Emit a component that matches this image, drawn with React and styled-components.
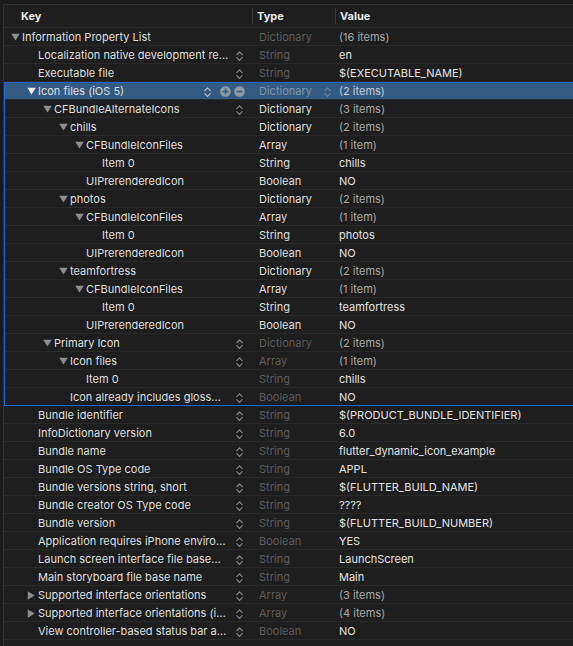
import React from 'react'
import styled, { createGlobalStyle } from 'styled-components'

const GlobalStyle = createGlobalStyle`
    html, body {
        margin: 0;
        padding: 0;
        background: #1b1b1b;
    }
    body {
        font-family: Inter, "Liberation Sans", sans-serif;
        -webkit-font-smoothing: antialiased;
    }
`

// level, open: 'down' | 'right' | null, key, type, value, flags
const rows = [
    { level: 0, open: 'down', key: 'Information Property List', type: 'Dictionary', value: '(16 items)', count: true },
    { level: 1, key: 'Localization native development re…', type: 'String', value: 'en', stepper: true },
    { level: 1, key: 'Executable file', type: 'String', value: '$(EXECUTABLE_NAME)', stepper: true },
    { level: 1, open: 'down', key: 'Icon files (iOS 5)', type: 'Dictionary', value: '(2 items)', count: true, stepper: true, selected: true },
    { level: 2, open: 'down', key: 'CFBundleAlternateIcons', type: 'Dictionary', value: '(3 items)', count: true, stepper: true, bright: true },
    { level: 3, open: 'down', key: 'chills', type: 'Dictionary', value: '(2 items)', count: true, bright: true },
    { level: 4, open: 'down', key: 'CFBundleIconFiles', type: 'Array', value: '(1 item)', count: true, bright: true },
    { level: 5, key: 'Item 0', type: 'String', value: 'chills', bright: true },
    { level: 4, key: 'UIPrerenderedIcon', type: 'Boolean', value: 'NO', bright: true },
    { level: 3, open: 'down', key: 'photos', type: 'Dictionary', value: '(2 items)', count: true, bright: true },
    { level: 4, open: 'down', key: 'CFBundleIconFiles', type: 'Array', value: '(1 item)', count: true, bright: true },
    { level: 5, key: 'Item 0', type: 'String', value: 'photos', bright: true },
    { level: 4, key: 'UIPrerenderedIcon', type: 'Boolean', value: 'NO', bright: true },
    { level: 3, open: 'down', key: 'teamfortress', type: 'Dictionary', value: '(2 items)', count: true, bright: true },
    { level: 4, open: 'down', key: 'CFBundleIconFiles', type: 'Array', value: '(1 item)', count: true, bright: true },
    { level: 5, key: 'Item 0', type: 'String', value: 'teamfortress', bright: true },
    { level: 4, key: 'UIPrerenderedIcon', type: 'Boolean', value: 'NO', bright: true },
    { level: 2, open: 'down', key: 'Primary Icon', type: 'Dictionary', value: '(2 items)', count: true, stepper: true },
    { level: 3, open: 'down', key: 'Icon files', type: 'Array', value: '(1 item)', count: true, stepper: true },
    { level: 4, key: 'Item 0', type: 'String', value: 'chills' },
    { level: 3, key: 'Icon already includes gloss…', type: 'Boolean', value: 'NO', stepper: true },
    { level: 1, key: 'Bundle identifier', type: 'String', value: '$(PRODUCT_BUNDLE_IDENTIFIER)', stepper: true },
    { level: 1, key: 'InfoDictionary version', type: 'String', value: '6.0', stepper: true },
    { level: 1, key: 'Bundle name', type: 'String', value: 'flutter_dynamic_icon_example', stepper: true },
    { level: 1, key: 'Bundle OS Type code', type: 'String', value: 'APPL', stepper: true },
    { level: 1, key: 'Bundle versions string, short', type: 'String', value: '$(FLUTTER_BUILD_NAME)', stepper: true },
    { level: 1, key: 'Bundle creator OS Type code', type: 'String', value: '????', stepper: true },
    { level: 1, key: 'Bundle version', type: 'String', value: '$(FLUTTER_BUILD_NUMBER)', stepper: true },
    { level: 1, key: 'Application requires iPhone enviro…', type: 'Boolean', value: 'YES', stepper: true },
    { level: 1, key: 'Launch screen interface file base…', type: 'String', value: 'LaunchScreen', stepper: true },
    { level: 1, key: 'Main storyboard file base name', type: 'String', value: 'Main', stepper: true },
    { level: 1, open: 'right', key: 'Supported interface orientations', type: 'Array', value: '(3 items)', count: true, stepper: true },
    { level: 1, open: 'right', key: 'Supported interface orientations (i…', type: 'Array', value: '(4 items)', count: true, stepper: true },
    { level: 1, key: 'View controller-based status bar a…', type: 'Boolean', value: 'NO', stepper: true },
]

const Stepper = ({ color = '#8a8a8a' }) => (
    <svg width="7" height="12" viewBox="0 0 7 12" fill="none">
        <path d="M0.8 4.6 L3.5 1.9 L6.2 4.6" stroke={color} strokeWidth="1.1" strokeLinecap="round" strokeLinejoin="round" />
        <path d="M0.8 7.6 L3.5 10.3 L6.2 7.6" stroke={color} strokeWidth="1.1" strokeLinecap="round" strokeLinejoin="round" />
    </svg>
)

const Disclosure = ({ dir, color }) =>
    dir === 'down' ? (
        <svg width="9" height="8" viewBox="0 0 9 8">
            <path d="M0.3 0.8 L8.7 0.8 L4.5 7.6 Z" fill={color} />
        </svg>
    ) : (
        <svg width="8" height="9" viewBox="0 0 8 9">
            <path d="M0.8 0.3 L7.6 4.5 L0.8 8.7 Z" fill={color} />
        </svg>
    )

const RoundButton = ({ minus }) => (
    <svg width="11" height="11" viewBox="0 0 11 11">
        <circle cx="5.5" cy="5.5" r="5.3" fill="#8f9aa6" />
        <rect x="2.6" y="4.8" width="5.8" height="1.5" fill="#345b80" />
        {!minus && <rect x="4.75" y="2.6" width="1.5" height="5.8" fill="#345b80" />}
    </svg>
)

const PlistRow = ({ row }) => (
    <Row $selected={row.selected}>
        <KeyCell $level={row.level}>
            <Toggle>
                {row.open && (
                    <Disclosure dir={row.open} color={row.selected ? '#f2f2f2' : '#8e8e8e'} />
                )}
            </Toggle>
            <KeyText>{row.key}</KeyText>
            {row.stepper && (
                <Controls $wide={row.selected}>
                    <Stepper color={row.selected ? '#b9c4d0' : '#8a8a8a'} />
                    {row.selected && (
                        <>
                            <RoundGap />
                            <RoundButton />
                            <RoundButton minus />
                        </>
                    )}
                </Controls>
            )}
        </KeyCell>
        <TypeCell $bright={row.bright} $selected={row.selected}>
            <span>{row.type}</span>
            {row.selected && <Stepper color="#6f89a6" />}
        </TypeCell>
        <ValueCell $count={row.count} $selected={row.selected}>
            {row.value}
        </ValueCell>
    </Row>
)

const App = () => {
    const before = rows.slice(0, 3)
    const group = rows.slice(3, 21)
    const after = rows.slice(21)

    return (
        <>
            <GlobalStyle />
            <Window>
                <Panel>
                    <Header>
                        <HeaderCell $pad={17}>Key</HeaderCell>
                        <HeaderCell $pad={4} $divider>Type</HeaderCell>
                        <HeaderCell $pad={4} $divider>Value</HeaderCell>
                    </Header>
                    {before.map((row, i) => (
                        <PlistRow key={'b' + i} row={row} />
                    ))}
                    <Group>
                        {group.map((row, i) => (
                            <PlistRow key={'g' + i} row={row} />
                        ))}
                    </Group>
                    {after.map((row, i) => (
                        <PlistRow key={'a' + i} row={row} />
                    ))}
                </Panel>
            </Window>
        </>
    )
}

export default App

const Window = styled.div`
    width: 573px;
    height: 646px;
    padding: 4px 0 0 3px;
    box-sizing: border-box;
    background: #1b1b1b;
    overflow: hidden;
`

const Panel = styled.div`
    height: 100%;
    border-left: 1px solid #323232;
    border-top: 1px solid #2e2e2e;
    background: #1e1e1e;
    display: flex;
    flex-direction: column;
`

const Header = styled.div`
    display: grid;
    grid-template-columns: 248px 83px 1fr;
    height: 23px;
    flex-shrink: 0;
    border-bottom: 1px solid #2c2c2c;
    box-sizing: border-box;
    align-items: center;
`

const HeaderCell = styled.div`
    padding-left: ${(p) => p.$pad}px;
    font-size: 11px;
    font-weight: 700;
    color: #e6e6e6;
    height: 16px;
    line-height: 16px;
    border-left: ${(p) => (p.$divider ? '1px solid #3a3a3a' : 'none')};
`

const Group = styled.div`
    position: relative;

    &::after {
        content: '';
        position: absolute;
        inset: 0 -2px 0 0;
        border: 1px solid #1f64d2;
        pointer-events: none;
    }
`

const Row = styled.div`
    display: grid;
    grid-template-columns: 248px 83px 1fr;
    height: 18px;
    flex-shrink: 0;
    box-sizing: border-box;
    border-bottom: 1px solid #2a2a2a;
    background: ${(p) => (p.$selected ? '#345b82' : 'transparent')};
    font-size: 11px;
    align-items: center;
`

const KeyCell = styled.div`
    display: flex;
    align-items: center;
    height: 100%;
    padding-left: ${(p) => 7 + p.$level * 16}px;
    min-width: 0;
`

const Toggle = styled.div`
    width: 11px;
    flex-shrink: 0;
    display: flex;
    align-items: center;
    padding-top: 1px;
`

const KeyText = styled.span`
    color: #dfdfdf;
    white-space: nowrap;
    overflow: hidden;
    flex: 1;
`

const Controls = styled.div`
    display: flex;
    align-items: center;
    gap: 3px;
    margin-right: ${(p) => (p.$wide ? 7 : 9)}px;
    padding-top: 2px;
`

const RoundGap = styled.span`
    width: 3px;
`

const TypeCell = styled.div`
    display: flex;
    align-items: center;
    justify-content: space-between;
    padding: 0 4px 0 7px;
    color: ${(p) => (p.$selected ? '#7f93aa' : p.$bright ? '#dedede' : '#5c5c5c')};
    white-space: nowrap;

    svg {
        margin-top: 2px;
    }
`

const ValueCell = styled.div`
    padding-left: 4px;
    color: ${(p) => (p.$selected ? '#c3cedb' : p.$count ? '#a8a8a8' : '#e2e2e2')};
    white-space: nowrap;
`
